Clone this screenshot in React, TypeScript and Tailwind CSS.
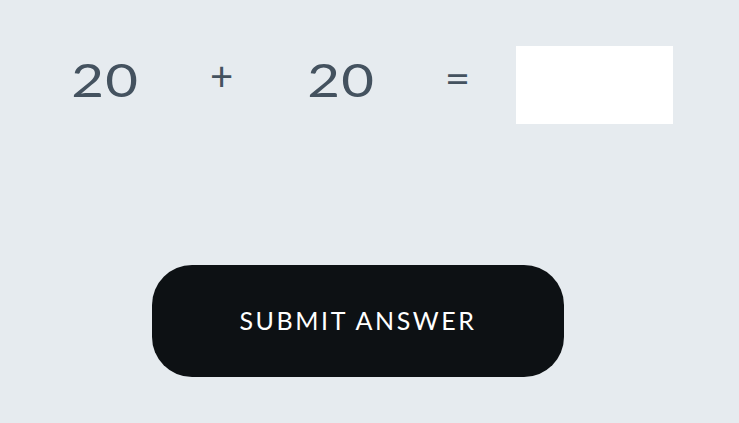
export default function App() {
  const cell = "w-[118px] flex justify-center text-[#44525f]";
  return (
    <div className="w-[739px] h-[423px] bg-[#e6ebef] overflow-hidden" style={{ fontFamily: "Lato, 'Open Sans', sans-serif" }}>
      <div className="flex items-start pl-[44px] pt-[46px]">
        <div className={cell + " pt-[10px] pl-[4px]"}>
          <span className="inline-block text-[47px] font-normal leading-none tracking-[1px] scale-x-[1.2]">20</span>
        </div>
        <div className={cell + " text-[40px] font-normal leading-none pt-[10px] pl-[1px]"}>+</div>
        <div className={cell + " pt-[10px] pl-[4px]"}>
          <span className="inline-block text-[47px] font-normal leading-none tracking-[1px] scale-x-[1.2]">20</span>
        </div>
        <div className={cell + " pt-[12px] pl-[2px]"}>
          <span className="inline-block text-[40px] font-normal leading-none scale-x-[1.1]">=</span>
        </div>
        <input className="w-[157px] h-[78px] bg-white outline-none" aria-label="answer" />
      </div>
      <div className="pl-[152px] pt-[141px]">
        <button className="w-[412px] h-[112px] rounded-[40px] bg-[#0d1114] text-white text-[25px] tracking-[2.6px] flex items-center justify-center">
          SUBMIT ANSWER
        </button>
      </div>
    </div>
  );
}
